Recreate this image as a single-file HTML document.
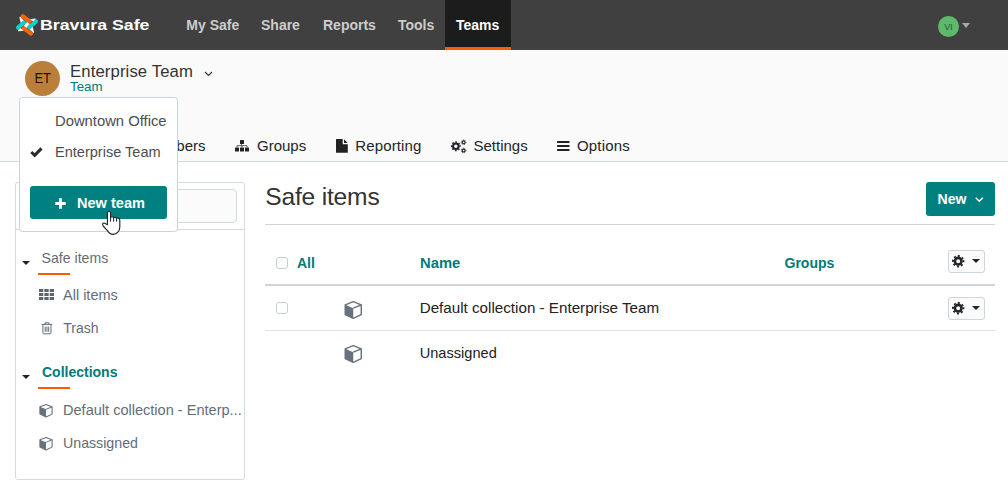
<!DOCTYPE html>
<html lang="en">
<head>
<meta charset="utf-8">
<title>Bravura Safe - Teams</title>
<style>
*{box-sizing:border-box;margin:0;padding:0}
html,body{width:1008px;height:491px;overflow:hidden;background:#fff;font-family:"Liberation Sans","DejaVu Sans",sans-serif;color:#333;font-size:14px}
.abs{position:absolute;white-space:nowrap;line-height:1}
svg{position:absolute;overflow:visible}
#hdr{position:absolute;left:0;top:0;width:1008px;height:50px;background:#404040}
#hdr .nav{position:absolute;top:17px;font-size:14px;font-weight:bold;color:#cdcdcd;line-height:17px;white-space:nowrap}
#hdr .act{position:absolute;left:445px;top:0;width:66px;height:50px;background:#1c1c1c;border-bottom:3px solid #fb5c06}
#brand{position:absolute;left:40px;top:16px;font-size:14px;font-weight:bold;color:#fff;line-height:18px;white-space:nowrap;transform-origin:0 50%;transform:scaleX(1.267)}
#sub{position:absolute;left:0;top:50px;width:1008px;height:112px;background:#fafafa;border-bottom:1px solid #d3d9e2}
.tab{position:absolute;top:137px;font-size:15px;line-height:18px;color:#212529;white-space:nowrap}
#dd{position:absolute;left:19px;top:97px;width:159px;height:135px;background:#fff;border:1px solid #cbd2da;border-radius:3.500px;z-index:10}
#side{position:absolute;left:15px;top:182px;width:230px;height:298px;background:#fff;border:1px solid #d5dae0;border-radius:3px}
.teal{color:#007b79}
.btn{position:absolute;background:#008080;color:#fff;font-weight:bold;border-radius:3px;white-space:nowrap}
.gear{position:absolute;width:37px;height:23px;border:1px solid #ced4da;border-radius:3px;background:#fbfbfb}
.hr{position:absolute;height:1px;background:#dee2e6}
.sitem{position:absolute;font-size:14px;color:#636d79;white-space:nowrap;line-height:16px}
.sitem.teal{color:#007b79}
.cb{position:absolute;width:12px;height:12px;border:1px solid #c6cdd6;border-radius:3px;background:#fff}
</style>
</head>
<body>
<div id="hdr">
  <div class="act"></div>
  <svg style="left:0;top:0" width="60" height="50" viewBox="0 0 60 50">
    <g transform="translate(27 24.900) scale(.95) translate(-27 -24.600)"><path d="M19.400 16.400L26.750 19.500L35.900 18.300L32.200 24.750L34 32.800L26.750 29.700L17.900 30.900L21.400 24.750z" fill="#fff" stroke="#fff" stroke-width=".8" stroke-linejoin="round"/>
    <g stroke-width="4.400" stroke-linecap="round" fill="none">
      <path d="M22.600 15.700 L31.400 22.100" stroke="#f5640f"/>
      <path d="M28.600 27.900 L36.500 21" stroke="#12cfc6"/>
      <path d="M22 26.900 L31.200 33.600" stroke="#f5640f"/>
      <path d="M17.600 27.500 L25.600 20.500" stroke="#12cfc6"/>
      <path d="M22.600 15.700 L28 19.630" stroke="#f5640f"/>
    </g>
    <g stroke="#333" stroke-width=".55" fill="none" opacity=".85">
      <path d="M21.100 17.400 L26.600 21.400"/><path d="M33 20.800 L28.400 24.800"/><path d="M32.600 32 L27.200 28.100"/><path d="M20.400 28 L25 24"/>
    </g></g>
  </svg>
  <div id="brand">Bravura Safe</div>
  <div class="nav" style="left:186.300px">My Safe</div>
  <div class="nav" style="left:261px">Share</div>
  <div class="nav" style="left:323px">Reports</div>
  <div class="nav" style="left:398px">Tools</div>
  <div class="nav" style="left:456px;color:#fff">Teams</div>
  <div class="abs" style="left:938px;top:16px;width:21px;height:21px;border-radius:50%;background:#5fb96c;color:#29592f;font-size:9px;text-align:center;line-height:22.200px">VI</div>
  <div class="abs" style="left:961.600px;top:23px;width:0;height:0;border-left:4.700px solid transparent;border-right:4.700px solid transparent;border-top:5px solid #a6a6a6"></div>
</div>

<div id="sub"></div>
<div class="abs" style="left:25px;top:61px;width:35px;height:35px;border-radius:50%;background:#ba7f3a;color:#220f04;font-size:15.200px;text-align:center;line-height:34.800px"><span style="display:inline-block;transform:scaleX(.850)">ET</span></div>
<div class="abs" style="left:70px;top:62px;font-size:16.7px;letter-spacing:.12px;line-height:20px;color:#333">Enterprise Team</div>
<svg style="left:204px;top:71px" width="9" height="6" viewBox="0 0 9 6"><path d="M1 1 L4.5 4.500 L8 1" fill="none" stroke="#333" stroke-width="1.150"/></svg>
<div class="abs teal" style="left:70px;top:79.300px;font-size:13.300px;line-height:15px">Team</div>

<div class="tab" style="left:143px">Members</div>
<!-- sitemap -->
<svg style="left:235.200px;top:140.200px" width="14" height="12" viewBox="0 0 14 12" fill="#222">
  <rect x="5" y="0" width="4" height="4" rx=".5"/><rect x="0" y="7.5" width="4" height="4" rx=".5"/><rect x="5" y="7.5" width="4" height="4" rx=".5"/><rect x="10" y="7.5" width="4" height="4" rx=".5"/>
  <path d="M6.5 4v2M2 7.5V5.7h10V7.5M7 5.7V7.5" stroke="#444" stroke-width=".850" fill="none"/>
</svg>
<div class="tab" style="left:257px">Groups</div>
<!-- file -->
<svg style="left:336px;top:139px" width="12" height="14" viewBox="0 0 12 14" fill="#222">
  <path d="M0.500 0h6.200v5.200h5.100v8a.5.500 0 0 1-.5.500H.5a.5.500 0 0 1-.5-.5V.5A.5.500 0 0 1 .5 0z"/><path d="M8 0.300L11.700 3.900H8z"/>
</svg>
<div class="tab" style="left:355.300px;letter-spacing:.13px">Reporting</div>
<!-- cogs -->
<svg style="left:451px;top:139.500px" width="16" height="13" viewBox="0 0 16 13" fill="none" stroke="#212529">
  <circle cx="4.800" cy="6.300" r="2.800" stroke-width="2"/>
  <circle cx="4.800" cy="6.300" r="4.250" stroke-width="1.400" stroke-dasharray="1.700 1.638" transform="rotate(-14 4.800 6.300)"/>
  <circle cx="12.600" cy="2.300" r="1.400" stroke-width="1.100"/>
  <circle cx="12.600" cy="2.300" r="2.300" stroke-width="1" stroke-dasharray=".900 .906"/>
  <circle cx="12.600" cy="10.500" r="1.400" stroke-width="1.100"/>
  <circle cx="12.600" cy="10.500" r="2.300" stroke-width="1" stroke-dasharray=".900 .906"/>
</svg>
<div class="tab" style="left:473.5px">Settings</div>
<!-- bars -->
<svg style="left:557px;top:141px" width="13" height="10" viewBox="0 0 13 10" fill="#222"><rect x="0" y="0" width="12.5" height="2" rx=".5"/><rect x="0" y="4" width="12.5" height="2" rx=".5"/><rect x="0" y="8" width="12.5" height="2" rx=".5"/></svg>
<div class="tab" style="left:577px;letter-spacing:.16px">Options</div>

<div id="dd">
  <div class="abs" style="left:35px;top:15px;font-size:14.800px;line-height:16px;color:#4d4d4d">Downtown Office</div>
  <svg style="left:10.300px;top:48.700px" width="13" height="10" viewBox="0 0 13 10"><path d="M1.300 5 L4.700 8.300 L11.500 1.400" fill="none" stroke="#2a2a2a" stroke-width="3"/></svg>
  <div class="abs" style="left:35px;top:46px;font-size:14.55px;line-height:16px;color:#4d4d4d">Enterprise Team</div>
  <div class="btn" style="left:10px;top:88px;width:137px;height:33px"></div>
  <svg style="left:35px;top:99.5px" width="11" height="11" viewBox="0 0 11 11"><path d="M5.5 0.3v10.4M0.3 5.5h10.4" stroke="#fff" stroke-width="2.800"/></svg>
  <div class="abs" style="left:57px;top:96.600px;font-size:14.550px;line-height:17px;color:#fff;font-weight:bold">New team</div>
</div>
<!-- hand cursor -->
<svg style="left:90px;top:195px;z-index:20" width="50" height="45" viewBox="0 0 50 45">
  <path d="M17.400 18.200C17.400 15.900 20.600 15.900 20.600 18.200V22.700C20.900 21.400 23.300 21.400 23.600 23C24 21.900 26.200 22 26.500 23.600C27 22.600 29.800 22.800 29.800 25.200V32C29.800 36 27 39.400 23 39.400C20.500 39.400 18.700 37.600 17.400 35.600L13.200 31C11.700 29.200 13 27.500 14.800 28.200L17.400 29.800z" fill="#fff" stroke="#212529" stroke-width="1.150" stroke-linejoin="round"/>
  <path d="M20.600 22.700V26.600M23.600 23V26.600M26.500 23.600V26.600" stroke="#212529" stroke-width="1" fill="none"/>
</svg>

<div id="side">
  <div class="abs" style="left:8px;top:6px;width:213px;height:34px;border:1px solid #d3d8de;border-radius:4px;background:#fbfbfb"></div>
  <div class="hr" style="left:0;top:46px;width:228px;background:#d5dae0"></div>
  <div class="abs" style="left:5.500px;top:78px;width:0;height:0;border-left:4px solid transparent;border-right:4px solid transparent;border-top:4px solid #222"></div>
  <div class="sitem" style="left:25.600px;top:67px;font-size:14.100px">Safe items</div>
  <div class="abs" style="left:22px;top:90px;width:32px;height:2px;background:#fa5c06"></div>
  <svg style="left:23.200px;top:106.300px" width="15" height="11" viewBox="0 0 15 11" fill="#5c6672"><rect x="0" y="0" width="4.300" height="3"/><rect x="5.35" y="0" width="4.300" height="3"/><rect x="10.7" y="0" width="4.300" height="3"/><rect x="0" y="4" width="4.300" height="3"/><rect x="5.35" y="4" width="4.300" height="3"/><rect x="10.7" y="4" width="4.300" height="3"/><rect x="0" y="8" width="4.300" height="3"/><rect x="5.35" y="8" width="4.300" height="3"/><rect x="10.7" y="8" width="4.300" height="3"/></svg>
  <div class="sitem" style="left:47px;top:104px;font-size:14.5px">All items</div>
  <svg style="left:24.600px;top:138.800px" width="11.900" height="12.500" viewBox="0 0 12 13" fill="none" stroke="#5c6672" stroke-width="1"><path d="M0.5 2.500h11M4 2.300V.8h4v1.500M1.800 2.800v8.500c0 .600.400 1 1 1h6.400c.600 0 1-.4 1-1V2.800M4.200 4.800v5.400M6 4.800v5.400M7.800 4.800v5.400"/></svg>
  <div class="sitem" style="left:47.200px;top:137px">Trash</div>
  <div class="abs" style="left:5.500px;top:192px;width:0;height:0;border-left:4px solid transparent;border-right:4px solid transparent;border-top:4px solid #222"></div>
  <div class="sitem teal" style="left:26px;top:181px;font-weight:bold">Collections</div>
  <div class="abs" style="left:22px;top:204px;width:32px;height:2px;background:#fa5c06"></div>
  <svg style="left:23.200px;top:220.900px" width="14" height="13.400" viewBox="0 0 18 18" preserveAspectRatio="none"><path d="M9 0.600L16.800 3.800V13.600L9 17.400L1.200 13.600V3.800z" fill="#fff" stroke="#68727e" stroke-width="1.400" stroke-linejoin="round"/><path d="M1.200 3.800L9 7.200V17.400L1.200 13.600z" fill="#68727e"/><path d="M9 7.200L16.800 3.800" stroke="#68727e" stroke-width="1.400" fill="none"/></svg>
  <div class="sitem" style="left:47px;top:219px;font-size:14.550px">Default collection - Enterp...</div>
  <svg style="left:23.200px;top:253.900px" width="14" height="13.400" viewBox="0 0 18 18" preserveAspectRatio="none"><path d="M9 0.600L16.800 3.800V13.600L9 17.400L1.200 13.600V3.800z" fill="#fff" stroke="#68727e" stroke-width="1.400" stroke-linejoin="round"/><path d="M1.200 3.800L9 7.200V17.400L1.200 13.600z" fill="#68727e"/><path d="M9 7.200L16.800 3.800" stroke="#68727e" stroke-width="1.400" fill="none"/></svg>
  <div class="sitem" style="left:47px;top:252px;font-size:14.200px">Unassigned</div>
</div>



<div class="abs" style="left:265.300px;top:182px;font-size:24.600px;letter-spacing:-.2px;line-height:30px;color:#333">Safe items</div>
<div class="btn" style="left:926px;top:182px;width:69px;height:34px"></div>
<div class="abs" style="left:937.500px;top:191.100px;font-size:14.1px;line-height:17px;color:#fff;font-weight:bold">New</div>
<svg style="left:974.800px;top:196.700px" width="9" height="6" viewBox="0 0 9 6"><path d="M0.800 0.800L4.300 4.200L7.800 0.800" fill="none" stroke="#fff" stroke-width="1.400"/></svg>
<div class="hr" style="left:265px;top:224px;width:730px;background:#ced4da"></div>

<div class="cb" style="left:276px;top:257px"></div>
<div class="abs teal" style="left:297px;top:255px;font-size:14px;font-weight:bold;line-height:16px">All</div>
<div class="abs teal" style="left:420px;top:255px;font-size:14.8px;font-weight:bold;line-height:16px">Name</div>
<div class="abs teal" style="left:784.500px;top:255px;font-size:14px;font-weight:bold;line-height:16px">Groups</div>
<div class="gear" style="left:948px;top:250px"></div>
<svg style="left:952px;top:255.400px" width="12.400" height="12.400" viewBox="0 0 12 12"><circle cx="6" cy="6" r="3.200" fill="none" stroke="#212529" stroke-width="2.500"/><circle cx="6" cy="6" r="5.100" fill="none" stroke="#212529" stroke-width="1.800" stroke-dasharray="1.900 2.105" transform="rotate(-10.700 6 6)"/></svg>
<div class="abs" style="left:972px;top:259px;width:0;height:0;border-left:4px solid transparent;border-right:4px solid transparent;border-top:4px solid #222"></div>
<div class="abs" style="left:265px;top:284px;width:730px;height:2px;background:#ced4da"></div>

<div class="cb" style="left:276px;top:302px"></div>
<svg style="left:344px;top:300.500px" width="18.500" height="18" preserveAspectRatio="none" viewBox="0 0 18 18"><path d="M9 0.600L16.800 3.800V13.600L9 17.400L1.200 13.600V3.800z" fill="#fff" stroke="#68727e" stroke-width="1.400" stroke-linejoin="round"/><path d="M1.200 3.800L9 7.200V17.400L1.200 13.600z" fill="#68727e"/><path d="M9 7.200L16.800 3.800" stroke="#68727e" stroke-width="1.400" fill="none"/></svg>
<div class="abs" style="left:419.700px;top:300px;font-size:15.2px;line-height:16px;color:#222">Default collection - Enterprise Team</div>
<div class="gear" style="left:948px;top:297px"></div>
<svg style="left:952px;top:302.400px" width="12.400" height="12.400" viewBox="0 0 12 12"><circle cx="6" cy="6" r="3.200" fill="none" stroke="#212529" stroke-width="2.500"/><circle cx="6" cy="6" r="5.100" fill="none" stroke="#212529" stroke-width="1.800" stroke-dasharray="1.900 2.105" transform="rotate(-10.700 6 6)"/></svg>
<div class="abs" style="left:972px;top:306px;width:0;height:0;border-left:4px solid transparent;border-right:4px solid transparent;border-top:4px solid #222"></div>
<div class="hr" style="left:265px;top:330px;width:730px"></div>
<svg style="left:344px;top:345px" width="18.500" height="18" preserveAspectRatio="none" viewBox="0 0 18 18"><path d="M9 0.600L16.800 3.800V13.600L9 17.400L1.200 13.600V3.800z" fill="#fff" stroke="#68727e" stroke-width="1.400" stroke-linejoin="round"/><path d="M1.200 3.800L9 7.200V17.400L1.200 13.600z" fill="#68727e"/><path d="M9 7.200L16.800 3.800" stroke="#68727e" stroke-width="1.400" fill="none"/></svg>
<div class="abs" style="left:419.700px;top:345px;font-size:14.6px;line-height:16px;color:#222">Unassigned</div>
</body>
</html>
